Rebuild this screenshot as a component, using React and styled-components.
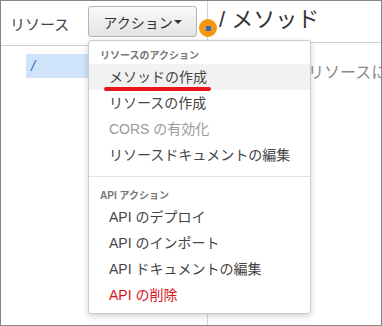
import styled, { createGlobalStyle } from "styled-components"

const Global = createGlobalStyle`
  html, body {
    margin: 0;
    padding: 0;
    background: #fff;
  }
  body {
    font-family: "Liberation Sans", "Noto Sans CJK JP", sans-serif;
    color: #444;
  }
`

const resourceActions = [
  { label: "メソッドの作成", active: true, marked: true },
  { label: "リソースの作成" },
  { label: "CORS の有効化", disabled: true },
  { label: "リソースドキュメントの編集" },
]

const apiActions = [
  { label: "API のデプロイ" },
  { label: "API のインポート" },
  { label: "API ドキュメントの編集" },
  { label: "API の削除", danger: true },
]

export default function App() {
  return (
    <>
      <Global />
      <Frame>
        <LeftPanel>
          <PanelHeader $height={45}>
            <Title>リソース</Title>
            <ActionWrap>
              <ActionButton>
                アクション<Caret />
              </ActionButton>
              <Menu>
                <MenuGroup title="リソースのアクション" items={resourceActions} />
                <Divider />
                <MenuGroup title="API アクション" items={apiActions} />
              </Menu>
            </ActionWrap>
          </PanelHeader>
          <Tree>
            <TreeRow $selected>/</TreeRow>
          </Tree>
        </LeftPanel>

        <Handle>
          <HandleDot />
        </Handle>

        <RightPanel>
          <PanelHeader $height={42}>
            <Heading>/ メソッド</Heading>
          </PanelHeader>
          <EmptyText>選択されたリソースにはメソッドがありません。</EmptyText>
        </RightPanel>
      </Frame>
    </>
  )
}

function MenuGroup({ title, items }) {
  return (
    <>
      <SectionTitle>{title}</SectionTitle>
      {items.map((item) => (
        <MenuItem
          key={item.label}
          $active={item.active}
          $disabled={item.disabled}
          $danger={item.danger}
        >
          {item.label}
          {item.marked && <Mark />}
        </MenuItem>
      ))}
    </>
  )
}

const Frame = styled.div`
  position: relative;
  box-sizing: border-box;
  width: 382px;
  height: 326px;
  border: 1px solid #858585;
  display: flex;
  overflow: hidden;
`

const LeftPanel = styled.div`
  width: 206px;
  flex: none;
  border-right: 1px solid #d4d4d4;
`

const RightPanel = styled.div`
  flex: 1;
  min-width: 0;
`

const PanelHeader = styled.div`
  box-sizing: border-box;
  height: ${(p) => p.$height}px;
  border-bottom: 1px solid #cfcfcf;
  display: flex;
  align-items: flex-start;
`

const Title = styled.div`
  font-size: 15px;
  line-height: 20px;
  padding: 14px 0 0 9px;
  width: 78px;
  color: #444;
`

const ActionWrap = styled.div`
  position: relative;
  margin-top: 5px;
`

const ActionButton = styled.div`
  box-sizing: border-box;
  width: 109px;
  height: 31px;
  border: 1px solid #b4b4b4;
  border-radius: 3px;
  background: linear-gradient(#f9f9f9, #e4e4e4);
  display: flex;
  align-items: center;
  justify-content: center;
  font-size: 14px;
  color: #333;
`

const Caret = styled.span`
  display: inline-block;
  margin-left: 1px;
  border-left: 4px solid transparent;
  border-right: 4px solid transparent;
  border-top: 4px solid #333;
`

const Menu = styled.div`
  position: absolute;
  top: 34px;
  left: 0;
  z-index: 2;
  box-sizing: border-box;
  width: 223px;
  padding-bottom: 5px;
  background: #fff;
  border: 1px solid #cccccc;
  border-radius: 3px;
  box-shadow: 0 2px 6px rgba(0, 0, 0, 0.18);
`

const SectionTitle = styled.div`
  padding: 7px 11px 0;
  height: 16px;
  font-size: 10px;
  line-height: 16px;
  font-weight: bold;
  color: #777;
  white-space: nowrap;
`

const MenuItem = styled.div`
  position: relative;
  height: 26px;
  line-height: 26px;
  padding-left: 20px;
  font-size: 14px;
  white-space: nowrap;
  background: ${(p) => (p.$active ? "#f2f2f2" : "transparent")};
  color: ${(p) => (p.$disabled ? "#9a9a9a" : p.$danger ? "#d9141b" : "#444")};
`

const Mark = styled.span`
  position: absolute;
  left: 15px;
  top: 23px;
  width: 107px;
  height: 4px;
  border-radius: 2px;
  background: #e8141c;
`

const Divider = styled.div`
  margin: 8px 0 4px;
  height: 1px;
  background: #e2e2e2;
`

const Tree = styled.div`
  padding: 8px 0 0 25px;
`

const TreeRow = styled.div`
  height: 24px;
  line-height: 24px;
  padding-left: 5px;
  font-size: 15px;
  font-style: italic;
  color: #2f6fc0;
  background: ${(p) => (p.$selected ? "#cfe3fb" : "transparent")};
`

const Handle = styled.div`
  position: absolute;
  left: 198px;
  top: 18px;
  width: 18px;
  height: 18px;
  border-radius: 50%;
  background: #f7970e;
  display: flex;
  align-items: center;
  justify-content: center;
  z-index: 1;
`

const HandleDot = styled.div`
  width: 5px;
  height: 5px;
  border-radius: 1px;
  background: #2e6bc4;
`

const Heading = styled.div`
  padding: 5px 0 0 11px;
  font-size: 22px;
  line-height: 28px;
  color: #333;
  white-space: nowrap;
`

const EmptyText = styled.div`
  padding: 19px 0 0 20px;
  font-size: 16px;
  line-height: 22px;
  color: #8a8a8a;
  white-space: nowrap;
`
